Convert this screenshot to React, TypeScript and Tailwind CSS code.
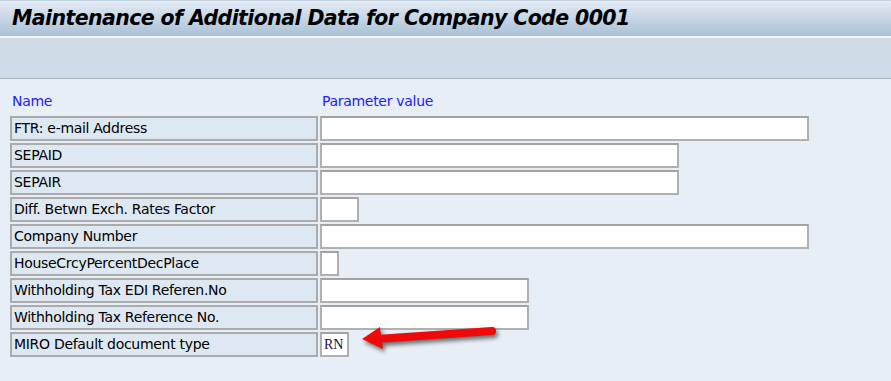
import React from 'react';

interface Param {
  name: string;
  width: number;
  value?: string;
}

const params: Param[] = [
  { name: 'FTR: e-mail Address', width: 489 },
  { name: 'SEPAID', width: 359 },
  { name: 'SEPAIR', width: 359 },
  { name: 'Diff. Betwn Exch. Rates Factor', width: 39 },
  { name: 'Company Number', width: 489 },
  { name: 'HouseCrcyPercentDecPlace', width: 19 },
  { name: 'Withholding Tax EDI Referen.No', width: 209 },
  { name: 'Withholding Tax Reference No.', width: 209 },
  { name: 'MIRO Default document type', width: 29, value: 'RN' },
];

const App: React.FC = () => {
  return (
    <div className="h-screen w-full overflow-hidden bg-[#e8eef5] font-['DejaVu_Sans',sans-serif] text-[14px] tracking-[-0.3px]">
      {/* Title bar */}
      <div className="h-[36px] border-t border-[#c3d2e0] bg-gradient-to-b from-[#e3ebf3] to-[#a9c1d7] pl-[12px] flex items-center">
        <h1 className="text-[20.5px] font-bold italic text-black tracking-[-0.6px] leading-none">
          Maintenance of Additional Data for Company Code 0001
        </h1>
      </div>
      <div className="h-[2px] bg-[#f2f6fa]" />

      {/* Toolbar */}
      <div className="h-[41px] bg-[#cfdce7] border-b border-[#a6b5c4]" />

      {/* Content */}
      <div className="relative px-[10px] pt-[14px]">
        <div className="flex h-[16px] items-center mb-[7px] text-[#2020ff] leading-none">
          <span className="w-[310px] pl-[2px]">Name</span>
          <span className="pl-[2px]">Parameter value</span>
        </div>

        <div className="flex flex-col gap-[2px]">
          {params.map((p) => (
            <div key={p.name} className="flex gap-[2px] h-[25px]">
              <div className="w-[308px] border-2 border-[#ababab] bg-[#dde8f2] pl-[2px] flex items-center text-black">
                {p.name}
              </div>
              <div
                className="border-2 border-[#b0b0b0] border-t-[#a2a2a2] bg-white flex items-center pl-[2px] font-['Liberation_Serif',serif] text-[14px] tracking-normal text-[#101040]"
                style={{ width: p.width }}
              >
                {p.value}
              </div>
            </div>
          ))}
        </div>

        {/* Callout arrow */}
        <svg
          className="absolute left-[355px] top-[240px] drop-shadow-[2px_3px_2px_rgba(0,0,0,0.55)]"
          width="150"
          height="35"
          viewBox="0 0 150 35"
        >
          <line x1="22" y1="20" x2="137" y2="12" stroke="#ee0a0a" strokeWidth="8" strokeLinecap="round" />
          <polygon points="7,20 25,8 28,30" fill="#ee0a0a" />
        </svg>
      </div>
    </div>
  );
};

export default App;
